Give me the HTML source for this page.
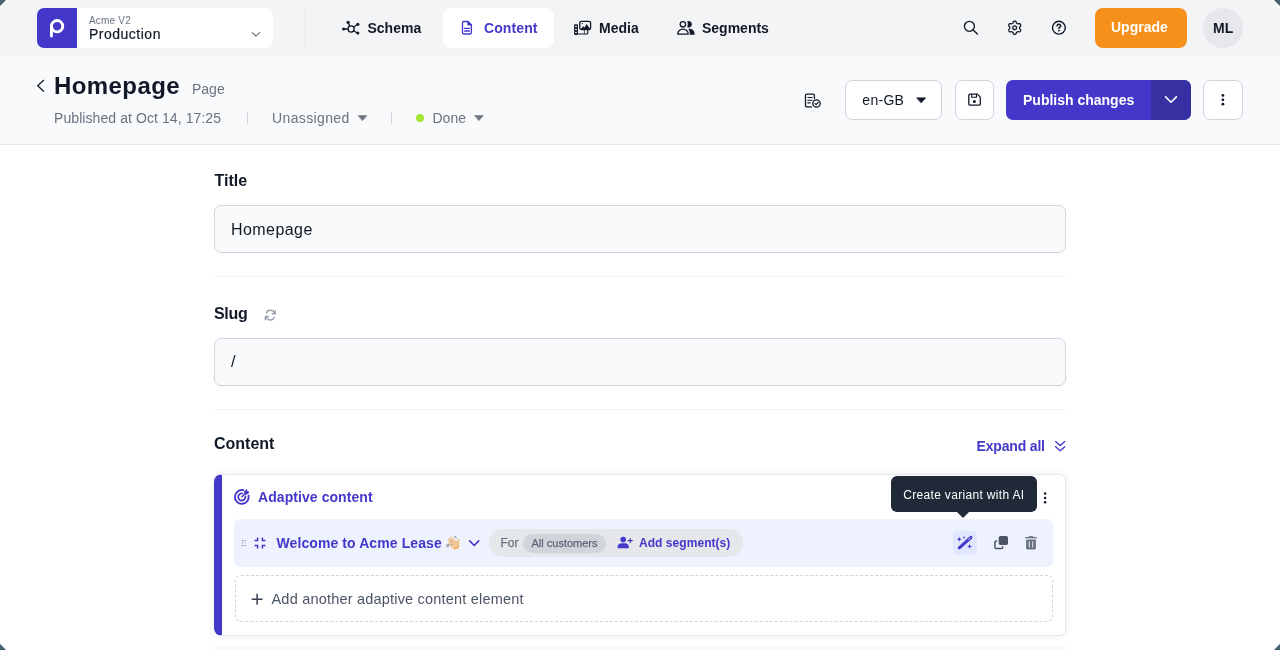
<!DOCTYPE html>
<html><head><meta charset="utf-8"><title>Homepage</title>
<style>
*{box-sizing:border-box;margin:0;padding:0}
html{background:#fff;}
body{width:1280px;height:650px;overflow:hidden;position:relative;font-family:"Liberation Sans",sans-serif;color:#111827;background:#fff;}
.abs{position:absolute}
.t{position:absolute;white-space:nowrap;line-height:1}
.b{font-weight:bold}
svg{position:absolute;left:0;top:0;overflow:visible}
#topbar{position:absolute;left:0;top:0;width:1280px;height:56px;background:#f3f4f6}
#sub{position:absolute;left:0;top:56px;width:1280px;height:89px;background:#f9fafb;border-bottom:1px solid #e5e7eb}
</style></head><body>
<div id="wrap" style="position:absolute;left:0;top:0;width:1280px;height:650px;will-change:transform">
<div id="topbar"></div>
<div id="sub"></div>
<div class="abs" style="left:37px;top:8px;width:236px;height:40px;background:#fff;border-radius:7px"></div>
<div class="abs" style="left:37px;top:8px;width:40px;height:40px;background:#4338ca;border-radius:7px 0 0 7px"></div>
<div class="t" style="left:89px;top:15.8px;font-size:10px;letter-spacing:.2px;color:#6b7280">Acme V2</div>
<div class="t" style="left:89px;top:27px;font-size:14px;letter-spacing:.5px;color:#111827;-webkit-text-stroke:.18px #111827">Production</div>
<div class="abs" style="left:305px;top:8px;width:1px;height:40px;background:#e5e7eb"></div>
<div class="abs" style="left:443px;top:8px;width:111px;height:40px;background:#fff;border-radius:8px"></div>
<div class="t b" style="left:367.5px;top:21px;font-size:14px">Schema</div>
<div class="t b" style="left:484px;top:21px;font-size:14px;letter-spacing:.1px;color:#4338ca">Content</div>
<div class="t b" style="left:599px;top:21px;font-size:14px">Media</div>
<div class="t b" style="left:702px;top:21px;font-size:14px">Segments</div>
<div class="abs" style="left:1094.5px;top:8px;width:92.5px;height:40px;background:#f5901d;border-radius:8px"></div>
<div class="t b" style="left:1111px;top:20px;font-size:14px;color:#fff">Upgrade</div>
<div class="abs" style="left:1203px;top:8px;width:40px;height:40px;background:#e5e7eb;border-radius:50%"></div>
<div class="t b" style="left:1213px;top:21px;font-size:14px">ML</div>
<div class="t b" style="left:54px;top:74px;font-size:24px;letter-spacing:.42px">Homepage</div>
<div class="t" style="left:192px;top:82px;font-size:14px;color:#6b7280">Page</div>
<div class="t" style="left:54px;top:111px;font-size:14px;letter-spacing:.08px;color:#6b7280">Published at Oct 14, 17:25</div>
<div class="abs" style="left:247px;top:112px;width:1px;height:12px;background:#d1d5db"></div>
<div class="t" style="left:272px;top:111px;font-size:14px;letter-spacing:.37px;color:#6b7280">Unassigned</div>
<div class="abs" style="left:390.5px;top:112px;width:1px;height:12px;background:#d1d5db"></div>
<div class="abs" style="left:416px;top:114px;width:8px;height:8px;border-radius:50%;background:#a3e635"></div>
<div class="t" style="left:432.5px;top:111px;font-size:14px;color:#6b7280">Done</div>
<div class="abs" style="left:845px;top:80px;width:97px;height:40px;background:#fff;border:1px solid #d1d4e0;border-radius:7px"></div>
<div class="t" style="left:862.3px;top:93px;font-size:14px;letter-spacing:.3px;color:#111827">en-GB</div>
<div class="abs" style="left:955px;top:80px;width:39px;height:40px;background:#fff;border:1px solid #d1d4e0;border-radius:7px"></div>
<div class="abs" style="left:1006px;top:80px;width:185px;height:40px;background:#4338ca;border-radius:7px"></div>
<div class="abs" style="left:1151px;top:80px;width:40px;height:40px;background:#3730a3;border-radius:0 7px 7px 0"></div>
<div class="t b" style="left:1023px;top:93px;font-size:14px;color:#fff">Publish changes</div>
<div class="abs" style="left:1203px;top:80px;width:40px;height:40px;background:#fff;border:1px solid #d1d4e0;border-radius:7px"></div>
<div class="t b" style="left:214.5px;top:173px;font-size:16px">Title</div>
<div class="abs" style="left:214px;top:205px;width:852px;height:48px;background:#f9fafb;border:1px solid #d1d4e0;border-radius:7px"></div>
<div class="t" style="left:231px;top:221.5px;font-size:16px;letter-spacing:.44px">Homepage</div>
<div class="abs" style="left:214px;top:276px;width:852px;height:1px;background:#f3f4f6"></div>
<div class="t b" style="left:214px;top:306px;font-size:16px;letter-spacing:-.3px">Slug</div>
<div class="abs" style="left:214px;top:338px;width:852px;height:48px;background:#f9fafb;border:1px solid #d1d4e0;border-radius:7px"></div>
<div class="t" style="left:231px;top:354px;font-size:16px">/</div>
<div class="abs" style="left:214px;top:409px;width:852px;height:1px;background:#f3f4f6"></div>
<div class="t b" style="left:214px;top:436px;font-size:16px">Content</div>
<div class="t b" style="left:976.6px;top:439px;font-size:14px;letter-spacing:-.18px;color:#4338ca">Expand all</div>
<div class="abs" style="left:214px;top:474px;width:852px;height:161.5px;background:#fff;border:1px solid #e7e9ee;border-left:8px solid #4338ca;border-radius:8px 6px 6px 8px;box-shadow:0 0 9px rgba(17,24,39,.07)"></div>
<div class="t b" style="left:258px;top:490px;font-size:14px;letter-spacing:.07px;color:#4338ca">Adaptive content</div>
<div class="abs" style="left:234px;top:519px;width:819px;height:48px;background:#eef2ff;border-radius:6px"></div>
<div class="t b" style="left:276.5px;top:536px;font-size:14px;letter-spacing:.09px;color:#4338ca">Welcome to Acme Lease</div>
<div class="abs" style="left:489px;top:529px;width:254px;height:28px;background:#e5e7eb;border-radius:14px"></div>
<div class="t" style="left:500.5px;top:537px;font-size:12px;color:#6b7280;-webkit-text-stroke:.25px #6b7280">For</div>
<div class="abs" style="left:523px;top:533.5px;width:82.5px;height:19px;background:#d1d5db;border-radius:10px"></div>
<div class="t" style="left:531.5px;top:537.6px;font-size:11px;color:#5d6578;-webkit-text-stroke:.25px #5d6578">All customers</div>
<div class="t b" style="left:639px;top:537px;font-size:12px;letter-spacing:.05px;color:#4338ca">Add segment(s)</div>
<div class="abs" style="left:953px;top:531px;width:24px;height:24px;background:#e0e7ff;border-radius:4px"></div>
<div class="abs" style="left:234.5px;top:575px;width:818.5px;height:47px;border:1px dashed #d1d5db;border-radius:6px"></div>
<div class="t" style="left:271.5px;top:592px;font-size:14.5px;letter-spacing:.2px;color:#4b5563">Add another adaptive content element</div>
<div class="abs" style="left:891px;top:476.3px;width:146px;height:35.9px;background:#1f2937;border-radius:6px"></div>
<div class="abs" style="left:957.4px;top:511.5px;width:0;height:0;border-left:6.5px solid transparent;border-right:6.5px solid transparent;border-top:6.5px solid #1f2937"></div>
<div class="t" style="left:903.2px;top:488.6px;font-size:12px;letter-spacing:.33px;color:#fff">Create variant with AI</div>
<div class="abs" style="left:214px;top:646px;width:852px;height:4px;background:#f9fafb"></div>
<svg width="1280" height="650" viewBox="0 0 1280 650" fill="none" stroke-linecap="round" stroke-linejoin="round">
<g stroke="#fff" stroke-width="2.9"><circle cx="57.1" cy="26.2" r="5.65"/><path d="M51.45 26.2V36"/></g>
<path d="M252.2 32.6l3.7 3.5 3.7-3.5" stroke="#6b7280" stroke-width="1.2"/>
<g stroke="#111827" stroke-width="1.3"><circle cx="351.1" cy="29" r="3.05"/><path d="M348.2 29H344.5M349.8 26.4L348.4 23.2M353.4 27.2L357 24.8M353.4 30.8L357 32.7"/></g>
<g fill="#111827"><circle cx="348.1" cy="22.3" r="1.6"/><circle cx="343.6" cy="29" r="1.55"/><circle cx="357.8" cy="24.3" r="1.6"/><circle cx="357.8" cy="33" r="1.6"/></g>
<g stroke="#4338ca" stroke-width="1.3"><path d="M463.9 21.5h4l3.5 3.5v7.6a1.4 1.4 0 0 1-1.4 1.4h-6.1a1.4 1.4 0 0 1-1.4-1.4v-9.7a1.4 1.4 0 0 1 1.4-1.4z"/><path d="M464.6 28.4h4.8M464.6 31h4.8"/></g>
<path d="M467.9 21.5v3.5h3.5z" fill="#4338ca" stroke="#4338ca" stroke-width="1"/>
<g stroke="#111827" stroke-width="1.3"><rect x="579.8" y="21.4" width="10.8" height="8.1" rx="1.4"/><path d="M578 34h8.500a1.300 1.300 0 0 0 1.300-1.300v-2.300" stroke-width="1.200"/><path d="M584.400 30.500v3.200" stroke-width="1" opacity=".75"/></g>
<path d="M580.900 29.100l2.400-2.900 1.200 1.200 2.200-3.400 3.400 5.100z" fill="#111827"/><circle cx="582.2" cy="23.6" r=".7" fill="#111827"/>
<rect x="574.1" y="24.2" width="3.9" height="10.7" rx="1.2" fill="#111827"/><g fill="#f3f4f6"><rect x="575.2" y="25.8" width="1.6" height="1.3"/><rect x="575.2" y="28.8" width="1.6" height="1.3"/><rect x="575.2" y="31.8" width="1.6" height="1.3"/></g>
<g stroke="#111827" stroke-width="1.3"><circle cx="682.9" cy="24.3" r="2.7"/><path d="M677.800 34.200v-.3a5.200 4.700 0 0 1 10.400 0v.3z"/></g>
<path d="M687.3 21.35A3.25 3.25 0 1 1 687.3 27.25A8 8 0 0 0 687.3 21.35z" fill="#111827"/><path d="M688.3 29a5 5 0 0 1 6.300 4.800v1h-4.800v-1.200a5.500 5.500 0 0 0-1.500-4.600z" fill="#111827"/>
<g stroke="#111827" stroke-width="1.35"><circle cx="969.4" cy="26.3" r="5"/><path d="M973.1 30l4.300 4.100"/></g>
<path d="M1014.70 21.17L1014.99 21.18L1015.27 21.21L1015.55 21.28L1015.82 21.42L1016.04 21.71L1016.19 22.20L1016.30 22.68L1016.43 22.99L1016.60 23.16L1016.79 23.28L1016.97 23.38L1017.16 23.49L1017.35 23.60L1017.53 23.71L1017.73 23.81L1017.96 23.87L1018.29 23.83L1018.77 23.68L1019.26 23.57L1019.63 23.62L1019.88 23.78L1020.08 23.99L1020.25 24.22L1020.40 24.46L1020.53 24.71L1020.65 24.98L1020.73 25.25L1020.74 25.55L1020.60 25.89L1020.25 26.26L1019.89 26.60L1019.69 26.87L1019.63 27.10L1019.62 27.32L1019.62 27.54L1019.62 27.75L1019.62 27.96L1019.62 28.18L1019.63 28.40L1019.69 28.63L1019.89 28.90L1020.25 29.24L1020.60 29.61L1020.74 29.95L1020.73 30.25L1020.65 30.52L1020.53 30.79L1020.40 31.04L1020.25 31.28L1020.08 31.51L1019.88 31.72L1019.63 31.88L1019.26 31.93L1018.77 31.82L1018.29 31.67L1017.96 31.63L1017.73 31.69L1017.53 31.79L1017.35 31.90L1017.16 32.01L1016.97 32.12L1016.79 32.22L1016.60 32.34L1016.43 32.51L1016.30 32.82L1016.19 33.30L1016.04 33.79L1015.82 34.08L1015.55 34.22L1015.27 34.29L1014.99 34.32L1014.70 34.33L1014.41 34.32L1014.13 34.29L1013.85 34.22L1013.58 34.08L1013.36 33.79L1013.21 33.30L1013.10 32.82L1012.97 32.51L1012.80 32.34L1012.61 32.22L1012.43 32.12L1012.24 32.01L1012.05 31.90L1011.87 31.79L1011.67 31.69L1011.44 31.63L1011.11 31.67L1010.63 31.82L1010.14 31.93L1009.77 31.88L1009.52 31.72L1009.32 31.51L1009.15 31.28L1009.00 31.04L1008.87 30.79L1008.75 30.52L1008.67 30.25L1008.66 29.95L1008.80 29.61L1009.15 29.24L1009.51 28.90L1009.71 28.63L1009.77 28.40L1009.78 28.18L1009.78 27.96L1009.78 27.75L1009.78 27.54L1009.78 27.32L1009.77 27.10L1009.71 26.87L1009.51 26.60L1009.15 26.26L1008.80 25.89L1008.66 25.55L1008.67 25.25L1008.75 24.98L1008.87 24.71L1009.00 24.46L1009.15 24.22L1009.32 23.99L1009.52 23.78L1009.77 23.62L1010.14 23.57L1010.63 23.68L1011.11 23.83L1011.44 23.87L1011.67 23.81L1011.87 23.71L1012.05 23.60L1012.24 23.49L1012.43 23.38L1012.61 23.28L1012.80 23.16L1012.97 22.99L1013.10 22.68L1013.21 22.20L1013.36 21.71L1013.58 21.42L1013.85 21.28L1014.13 21.21L1014.41 21.18z" stroke="#111827" stroke-width="1.3" stroke-linejoin="round"/>
<circle cx="1014.7" cy="27.75" r="1.9" stroke="#111827" stroke-width="1.3"/>
<circle cx="1058.9" cy="27.7" r="6.4" stroke="#111827" stroke-width="1.4"/>
<path d="M1057.1 25.9a1.800 1.600 0 1 1 2.500 1.500c-.5.300-.7.500-.7 1.100" stroke="#111827" stroke-width="1.5"/><circle cx="1058.9" cy="30.6" r=".95" fill="#111827"/>
<path d="M43.6 80.300L37.700 85.700 43.600 91.200" stroke="#111827" stroke-width="1.25"/>
<path d="M358.400 115.600h8.400l-4.200 4.900z" fill="#6b7280" stroke="#6b7280" stroke-width=".6"/>
<path d="M474.800 115.600h8.400l-4.200 4.900z" fill="#6b7280" stroke="#6b7280" stroke-width=".6"/>
<path d="M917.100 97.900h8.400l-4.200 4.700z" fill="#111827" stroke="#111827" stroke-width=".9"/>
<g stroke="#111827" stroke-width="1.3"><path d="M814.400 98.500v-3.100a1.300 1.300 0 0 0-1.300-1.300h-6.300a1.300 1.300 0 0 0-1.300 1.300v10.200a1.300 1.300 0 0 0 1.300 1.300h4.700"/><path d="M807.900 97.500h4.200M807.900 100.200h4.200M807.900 102.900h2.200" stroke-width="1.1"/><circle cx="816.500" cy="103.500" r="3.700"/><path d="M815 103.600l1.100 1.100 2-2.200" stroke-width="1.200"/></g>
<g stroke="#111827" stroke-width="1.3"><path d="M970.100 94.100h7.200l3 3v6.800a1.300 1.300 0 0 1-1.300 1.300h-8.900a1.300 1.300 0 0 1-1.300-1.300v-8.500a1.300 1.300 0 0 1 1.300-1.300z"/><path d="M971.700 94.300v3h4.800v-3" stroke-width="1.1"/></g><circle cx="974.400" cy="101.500" r="1.500" fill="#111827"/>
<path d="M1165.600 96.900l5.400 5.300 5.400-5.300" stroke="#fff" stroke-width="1.600"/>
<g fill="#111827"><circle cx="1222.900" cy="95.400" r="1.400"/><circle cx="1222.900" cy="99.800" r="1.400"/><circle cx="1222.900" cy="104.200" r="1.400"/></g>
<g stroke="#9ca3af" stroke-width="1.400"><path d="M274.600 313.600a4.300 4.300 0 0 0-8.200-.6M266.000 316.700a4.300 4.300 0 0 0 8.200.6"/><path d="M275.300 310.600v3.200h-3.200M265.300 319.700v-3.200h3.200"/></g>
<path d="M1055.600 441.600l4.600 4 4.600-4M1055.600 446.700l4.600 4 4.600-4" stroke="#4338ca" stroke-width="1.350"/>
<g stroke="#4338ca"><path d="M248.52 495.35A6.90 6.90 0 1 1 243.23 490.15" stroke-width="1.85"/><path d="M245.36 496.40A3.60 3.60 0 1 1 242.05 493.31" stroke-width="1.75"/><path d="M241.9 496.8l3.3-3.300" stroke-width="1.500"/></g>
<path d="M244.500 493.900l.3-2.700 1.800-1.600.4 2 2 .4-1.600 1.800z" fill="#4338ca" stroke="#4338ca" stroke-width=".9"/>
<g fill="#111827"><circle cx="1045.100" cy="493.600" r="1.250"/><circle cx="1045.100" cy="497.950" r="1.250"/><circle cx="1045.100" cy="502.300" r="1.250"/></g>
<g fill="#6b7280"><rect x="241.900" y="540" width="1.100" height="1.100"/><rect x="241.900" y="542.500" width="1.100" height="1.100" opacity=".6"/><rect x="241.900" y="545" width="1.100" height="1.100"/></g><g fill="#9ca3af"><rect x="244.300" y="540" width="1.500" height="1.100"/><rect x="244.300" y="542.500" width="1.500" height="1.100" opacity=".5"/><rect x="244.300" y="545" width="1.500" height="1.100"/></g>
<path d="M254.500 540.600h3.100v-3.100M265.500 540.600h-3.100v-3.100M254.500 545.400h3.100v3.100M265.500 545.400h-3.100v3.100" stroke="#4338ca" stroke-width="1.500" stroke-linecap="butt" stroke-linejoin="miter"/>
<g><path d="M448 540.600L449.200 537.300L450.200 539L451.300 536.100L452.500 538.400L453.800 537.300L455 540.600L456.800 540.900L457.200 539.400L459.900 539.100L459.400 541.500L459.300 546Q458.200 548.800 454.500 549.100Q451.800 548.500 448.200 544.100L449 542.500Z" fill="#f1c895"/><path d="M453 548.500Q457.300 548.200 459.200 544.800L459.300 546.200Q458.200 549 454.500 549.200z" fill="#f0a446"/><circle cx="451.450" cy="541.450" r=".6" fill="#7f8db3"/><circle cx="451.450" cy="544.400" r=".6" fill="#7f8db3"/><path d="M446.300 544.800l1.900 2.400M447.600 544l1.500 1.900M454.400 535.900l2.200 2.200" stroke="#8d95a6" stroke-width="1.250" stroke-linecap="butt"/></g>
<path d="M469.700 540.900l4.500 4.600 4.500-4.600" stroke="#4338ca" stroke-width="1.600"/>
<g fill="#4338ca"><circle cx="623.200" cy="539.600" r="2.800"/><path d="M617.600 548.200v-.9a4.100 4.100 0 0 1 4.100-4.100h3a4.100 4.100 0 0 1 4.100 4.100v.9z"/></g><path d="M630.200 538.500v4.200M628.100 540.600h4.200" stroke="#4338ca" stroke-width="1.100"/>
<path d="M959.300 547.800l11.600-10.300" stroke="#4338ca" stroke-width="3.100" stroke-linecap="round"/><path d="M968.600 539.300l1.500-1.300" stroke="#e0e7ff" stroke-width="1" />
<path d="M959.30 536.70L960.00 538.50L961.80 539.20L960.00 539.90L959.30 541.70L958.60 539.90L956.80 539.20L958.60 538.50zM964.10 535.90L964.52 536.98L965.60 537.40L964.52 537.82L964.10 538.90L963.68 537.82L962.60 537.40L963.68 536.98zM969.60 543.90L970.30 545.70L972.10 546.40L970.30 547.10L969.60 548.90L968.90 547.10L967.10 546.40L968.90 545.70z" fill="#4338ca" stroke="none"/>
<rect x="998.700" y="536" width="9.300" height="8.900" rx="1.700" fill="#4b5563"/><path d="M996.700 540.900h-.4a1.400 1.400 0 0 0-1.400 1.400v4.900a1.400 1.400 0 0 0 1.400 1.400h5a1.400 1.400 0 0 0 1.400-1.400v-.4" stroke="#4b5563" stroke-width="1.500"/>
<g fill="#6b7280"><path d="M1025.200 537h11.600v1.300h-11.600z"/><path d="M1028.800 536.100h4.400v1.200h-4.400z"/><path d="M1026.100 539.400h9.800v8.700a1.300 1.300 0 0 1-1.300 1.300h-7.200a1.300 1.300 0 0 1-1.300-1.300z"/></g><path d="M1029.300 541.200v6.400M1032.700 541.200v6.400" stroke="#dfe3f3" stroke-width="1.100" stroke-linecap="butt"/>
<path d="M257.100 593.800v10.900M251.650 599.250h10.900" stroke="#374151" stroke-width="1.500" stroke-linecap="butt"/>
<polygon points="0,0 6.4,0 0,6.4" fill="#45636d"/>
<path d="M7.2 0L0 7.2" stroke="#fff" stroke-width="1.2" stroke-linecap="butt"/>
<polygon points="1280,0 1273.6,0 1280,6.4" fill="#45636d"/>
<path d="M1272.8 0L1280 7.2" stroke="#fff" stroke-width="1.2" stroke-linecap="butt"/>
<polygon points="0,650 6.4,650 0,643.6" fill="#45636d"/>
<path d="M7.2 650L0 642.8" stroke="#fff" stroke-width="1.2" stroke-linecap="butt"/>
<polygon points="1280,650 1273.6,650 1280,643.6" fill="#45636d"/>
<path d="M1272.8 650L1280 642.8" stroke="#fff" stroke-width="1.2" stroke-linecap="butt"/>
</svg>
</div></body></html>
